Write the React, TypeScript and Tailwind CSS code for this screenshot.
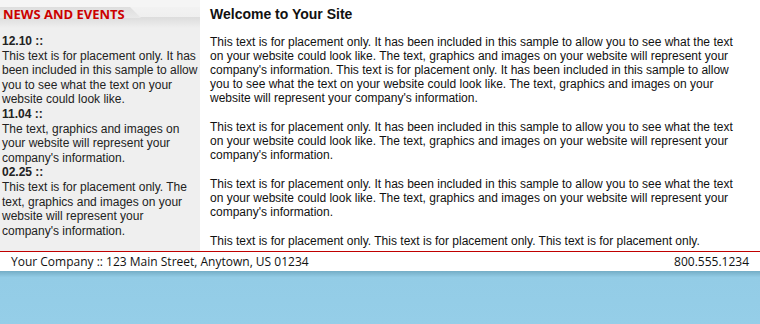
const para1 =
  "This text is for placement only. It has been included in this sample to allow you to see what the text on your website could look like. The text, graphics and images on your website will represent your company's information. This text is for placement only. It has been included in this sample to allow you to see what the text on your website could look like. The text, graphics and images on your website will represent your company's information.";
const para2 =
  "This text is for placement only. It has been included in this sample to allow you to see what the text on your website could look like. The text, graphics and images on your website will represent your company's information.";
const para3 = "This text is for placement only. This text is for placement only. This text is for placement only.";

const news = [
  { date: "12.10 ::", text: "This text is for placement only. It has been included in this sample to allow you to see what the text on your website could look like." },
  { date: "11.04 ::", text: "The text, graphics and images on your website will represent your company's information." },
  { date: "02.25 ::", text: "This text is for placement only. The text, graphics and images on your website will represent your company's information." },
];

export default function App() {
  return (
    <div className="w-[760px] h-[324px] flex flex-col bg-white overflow-hidden font-['Liberation_Sans',Arial,sans-serif]">
      <div className="flex h-[251px]">
        {/* sidebar */}
        <aside className="w-[200px] bg-[#efefef] flex flex-col">
          <div className="relative h-[28px] bg-gradient-to-b from-[#f4f4f4] to-[#ececec]">
            <svg className="absolute left-0 top-0" width="200" height="28" viewBox="0 0 200 28">
              <defs>
                <linearGradient id="tab" x1="0" y1="0" x2="0" y2="1">
                  <stop offset="0" stopColor="#dedede" />
                  <stop offset="1" stopColor="#e9e9e9" />
                </linearGradient>
                <linearGradient id="band" x1="0" y1="0" x2="0" y2="1">
                  <stop offset="0" stopColor="#dcdcdc" />
                  <stop offset="1" stopColor="#efefef" />
                </linearGradient>
              </defs>
              <rect x="0" y="0" width="200" height="7" fill="#f5f5f5" />
              <rect x="0" y="17" width="200" height="11" fill="url(#band)" />
              <polygon points="0,7 130,7 141,18 0,18" fill="url(#tab)" />
            </svg>
            <div className="relative pl-[3px] pt-[7px] text-[13px] leading-[15px] font-bold text-[#cc0000] font-['Open_Sans',sans-serif]">
              NEWS AND EVENTS
            </div>
          </div>
          <div className="px-[2px] pt-[6px] text-[12px] leading-[14.6px] text-[#222]">
            {news.map((n) => (
              <div key={n.date}>
                <div className="font-bold">{n.date}</div>
                <div>{n.text}</div>
              </div>
            ))}
          </div>
        </aside>

        {/* main */}
        <main className="flex-1 pl-[10px] pr-[12px] pt-[5px] text-[#111]">
          <h1 className="text-[14px] leading-[18px] font-bold mb-[12px]">Welcome to Your Site</h1>
          <div className="text-[12px] leading-[14px] flex flex-col gap-[15px]">
            <p>{para1}</p>
            <p>{para2}</p>
            <p>{para2}</p>
            <p>{para3}</p>
          </div>
        </main>
      </div>

      <div className="h-px bg-[#c00000]" />
      <footer className="h-[19px] flex items-center justify-between pl-[11px] pr-[11px] text-[12px] text-[#111] font-['Open_Sans',sans-serif]">
        <span>Your Company :: 123 Main Street, Anytown, US 01234</span>
        <span>800.555.1234</span>
      </footer>
      <div className="flex-1 bg-gradient-to-b from-[#74adc6] via-[#93cce6] via-[12%] to-[#95cee8]" />
    </div>
  );
}
